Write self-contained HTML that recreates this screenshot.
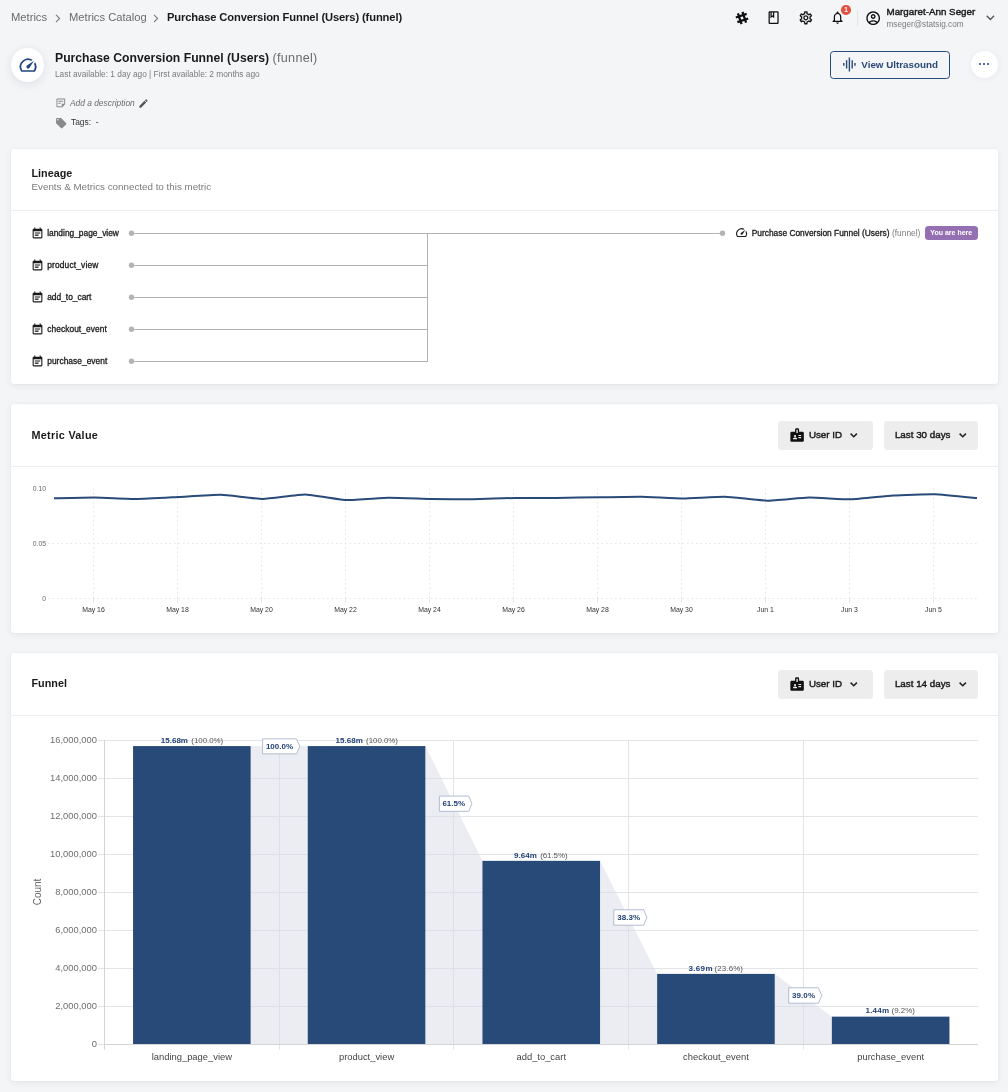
<!DOCTYPE html>
<html>
<head>
<meta charset="utf-8">
<title>Purchase Conversion Funnel (Users)</title>
<style>
*{box-sizing:border-box;margin:0;padding:0}
html,body{width:1008px;height:1092px;overflow:hidden}
html{background:#f4f5f7}
body{background:#f4f5f7;font-family:"Liberation Sans",sans-serif;color:#1a1a1a;position:relative;will-change:transform}
.abs{position:absolute;white-space:nowrap;line-height:1}
.t{position:absolute;white-space:nowrap;line-height:1}
.sb{font-weight:normal;-webkit-text-stroke:0.42px currentColor}
.sb2{font-weight:normal;-webkit-text-stroke:0.3px currentColor}
.b{font-weight:bold}
.card{position:absolute;left:11px;width:987px;background:#fff;border-radius:3px;box-shadow:0 2px 6px rgba(30,40,60,.07),0 0 2px rgba(30,40,60,.05)}
.hr{position:absolute;left:0;right:0;height:1px;background:#eee}
.btn{position:absolute;background:#ededed;border-radius:3.5px}
svg{position:absolute;overflow:visible}
</style>
</head>
<body>

<!-- top bar -->
<div class="t" id="bc1" style="left:11px;top:12px;font-size:11.2px;color:#6b6b6b">Metrics</div>
<svg style="left:55px;top:14px" width="6" height="9" viewBox="0 0 6 9"><path d="M1 0.8 L4.6 4.5 L1 8.2" fill="none" stroke="#7a7a7a" stroke-width="1.1"/></svg>
<div class="t" id="bc2" style="left:69px;top:12px;font-size:11.2px;color:#6b6b6b">Metrics Catalog</div>
<svg style="left:153px;top:14px" width="6" height="9" viewBox="0 0 6 9"><path d="M1 0.8 L4.6 4.5 L1 8.2" fill="none" stroke="#7a7a7a" stroke-width="1.1"/></svg>
<div class="t b" id="bc3" style="left:167px;top:12px;font-size:11.2px;letter-spacing:-0.13px;color:#1a1a1a">Purchase Conversion Funnel (Users) (funnel)</div>
<svg style="left:734px;top:9.9px" width="16" height="16" viewBox="-8 -8 16 16"><g transform="rotate(-18.5)" stroke="#111" stroke-width="2.3" fill="none"><path d="M-2.4 -5.7 V5.7 M2.4 -5.7 V5.7 M-5.7 -2.4 H5.7 M-5.7 2.4 H5.7"/></g></svg>
<svg style="left:766.4px;top:10.45px" width="15.2" height="15.2" viewBox="0 0 24 24"><path fill="#111" d="M18 2H6c-1.1 0-2 .9-2 2v16c0 1.1.9 2 2 2h12c1.1 0 2-.9 2-2V4c0-1.1-.9-2-2-2zM9 4h2v5l-1-.75L9 9V4zm9 16H6V4h1v9l3-2.25L13 13V4h5v16z"/></svg>
<svg style="left:798.15px;top:10.2px" width="15.7" height="15.7" viewBox="0 0 24 24"><path fill="#111" d="M19.43 12.98c.04-.32.07-.64.07-.98 0-.34-.03-.66-.07-.98l2.11-1.65c.19-.15.24-.42.12-.64l-2-3.46c-.09-.16-.26-.25-.44-.25-.06 0-.12.01-.17.03l-2.49 1c-.52-.4-1.08-.73-1.69-.98l-.38-2.65C14.46 2.18 14.25 2 14 2h-4c-.25 0-.46.18-.49.42l-.38 2.65c-.61.25-1.17.59-1.69.98l-2.49-1c-.06-.02-.12-.03-.18-.03-.17 0-.34.09-.43.25l-2 3.46c-.13.22-.07.49.12.64l2.11 1.65c-.04.32-.07.65-.07.98 0 .33.03.66.07.98l-2.11 1.65c-.19.15-.24.42-.12.64l2 3.46c.09.16.26.25.44.25.06 0 .12-.01.17-.03l2.49-1c.52.4 1.08.73 1.69.98l.38 2.65c.03.24.24.42.49.42h4c.25 0 .46-.18.49-.42l.38-2.65c.61-.25 1.17-.59 1.69-.98l2.49 1c.06.02.12.03.18.03.17 0 .34-.09.43-.25l2-3.46c.12-.22.07-.49-.12-.64l-2.11-1.65zm-1.98-1.71c.04.31.05.52.05.73 0 .21-.02.43-.05.73l-.14 1.13.89.7 1.08.84-.7 1.21-1.27-.51-1.04-.42-.9.68c-.43.32-.84.56-1.25.73l-1.06.43-.16 1.13-.2 1.35h-1.4l-.19-1.35-.16-1.13-1.06-.43c-.43-.18-.83-.41-1.23-.71l-.91-.7-1.06.43-1.27.51-.7-1.21 1.08-.84.89-.7-.14-1.13c-.03-.31-.05-.54-.05-.74s.02-.43.05-.73l.14-1.13-.89-.7-1.08-.84.7-1.21 1.27.51 1.04.42.9-.68c.43-.32.84-.56 1.25-.73l1.06-.43.16-1.13.2-1.35h1.39l.19 1.35.16 1.13 1.06.43c.43.18.83.41 1.23.71l.91.7 1.06-.43 1.27-.51.7 1.21-1.07.85-.89.7.14 1.13zM12 8c-2.21 0-4 1.79-4 4s1.79 4 4 4 4-1.79 4-4-1.79-4-4-4zm0 6c-1.1 0-2-.9-2-2s.9-2 2-2 2 .9 2 2-.9 2-2 2z"/></svg>
<svg style="left:830.25px;top:10.19px" width="15.1" height="15.1" viewBox="0 0 24 24"><path fill="#111" d="M12 22c1.1 0 2-.9 2-2h-4c0 1.1.9 2 2 2zm6-6v-5c0-3.07-1.63-5.64-4.5-6.32V4c0-.83-.67-1.5-1.5-1.5s-1.5.67-1.5 1.5v.68C7.64 5.36 6 7.92 6 11v5l-2 2v1h16v-1l-2-2zm-2 1H8v-6c0-2.48 1.51-4.5 4-4.5s4 2.02 4 4.5v6z"/></svg>
<div class="abs" style="left:841.2px;top:5px;width:9.6px;height:9.6px;border-radius:50%;background:#e4503f;color:#fff;font-size:6.5px;font-weight:bold;text-align:center;line-height:9.8px">1</div>
<div class="abs" style="left:857px;top:10px;width:1px;height:16px;background:#e3e4e8"></div>
<svg style="left:864.9px;top:10.1px" width="16.4" height="16.4" viewBox="0 0 24 24"><path fill="#111" d="M12 2C6.48 2 2 6.48 2 12s4.48 10 10 10 10-4.48 10-10S17.52 2 12 2zM7.35 18.5C8.66 17.56 10.26 17 12 17s3.34.56 4.65 1.5c-1.31.94-2.91 1.5-4.65 1.5s-3.34-.56-4.65-1.5zm10.79-1.38C16.45 15.8 14.32 15 12 15s-4.45.8-6.14 2.12C4.7 15.73 4 13.95 4 12c0-4.42 3.58-8 8-8s8 3.58 8 8c0 1.95-.7 3.73-1.86 5.12zM12 6c-1.93 0-3.5 1.57-3.5 3.5S10.07 13 12 13s3.5-1.57 3.5-3.5S13.93 6 12 6zm0 5c-.83 0-1.5-.67-1.5-1.5S11.17 8 12 8s1.5.67 1.5 1.5S12.83 11 12 11z"/></svg>
<div class="t sb" id="uname" style="left:886.5px;top:7px;font-size:9.8px;color:#1a1a1a">Margaret-Ann Seger</div>
<div class="t" id="umail" style="left:886.5px;top:21px;font-size:8.2px;color:#7b7b7b">mseger@statsig.com</div>
<svg style="left:985.6px;top:14.9px" width="9" height="6" viewBox="0 0 9 6"><path d="M0.7 0.8 L4.4 4.5 L8.1 0.8" fill="none" stroke="#555" stroke-width="1.35"/></svg>
<!-- title block -->
<div class="abs" id="ticon" style="left:11px;top:48px;width:33.4px;height:33.6px;border-radius:50%;background:#fff;box-shadow:0 2px 10px rgba(30,40,60,.10)"></div>
<svg style="left:18.25px;top:55.4px" width="20.2" height="20.2" viewBox="0 0 24 24"><path fill="#1f4480" d="M20.38 8.57l-1.23 1.85a8 8 0 0 1-.22 7.58H5.07A8 8 0 0 1 15.58 6.85l1.85-1.23A10 10 0 0 0 3.35 19a2 2 0 0 0 1.72 1h13.85a2 2 0 0 0 1.74-1 10 10 0 0 0-.27-10.44zm-9.79 6.84a2 2 0 0 0 2.83 0l5.66-8.49-8.49 5.66a2 2 0 0 0 0 2.83z"/></svg>
<div class="t b" id="title" style="left:55px;top:52px;font-size:12.2px;color:#1a1a1a">Purchase Conversion Funnel (Users)</div>
<div class="t" id="title2" style="left:272.5px;top:52px;font-size:12.6px;letter-spacing:0.3px;color:#6b6b6b">(funnel)</div>
<div class="t" id="sub" style="left:55px;top:70px;font-size:8.3px;color:#7b7b7b">Last available: 1 day ago | First available: 2 months ago</div>
<svg style="left:54.55px;top:97.35px" width="11.6" height="11.6" viewBox="0 0 24 24"><path fill="#8a8a8a" d="M19 5v9h-5v5H5V5h14m0-2H5c-1.1 0-2 .9-2 2v14c0 1.1.9 2 2 2h10l6-6V5c0-1.1-.9-2-2-2zm-7 11H7v-2h5v2zm5-4H7V8h10v2z"/></svg>
<div class="t" id="adddesc" style="left:70px;top:99px;font-size:8.4px;font-style:italic;color:#6b6b6b">Add a description</div>
<svg style="left:137.5px;top:97.7px" width="11" height="11" viewBox="0 0 24 24"><path fill="#555" d="M3 17.25V21h3.75L17.81 9.94l-3.75-3.75L3 17.25zM20.71 7.04c.39-.39.39-1.02 0-1.41l-2.34-2.34c-.39-.39-1.02-.39-1.41 0l-1.83 1.83 3.75 3.75 1.83-1.83z"/></svg>
<svg style="left:54.9px;top:117px" width="12.4" height="12.4" viewBox="0 0 24 24"><path fill="#8a8a8a" d="M21.41 11.58l-9-9C12.05 2.22 11.55 2 11 2H4c-1.1 0-2 .9-2 2v7c0 .55.22 1.05.59 1.42l9 9c.36.36.86.58 1.41.58.55 0 1.05-.22 1.41-.59l7-7c.37-.36.59-.86.59-1.41 0-.55-.23-1.06-.59-1.42zM5.5 7C4.67 7 4 6.33 4 5.5S4.67 4 5.5 4 7 4.67 7 5.5 6.33 7 5.5 7z"/></svg>
<div class="t" id="tags" style="left:71px;top:118px;font-size:8.4px;color:#333">Tags:&nbsp; -</div>
<div class="abs" id="vubtn" style="left:830px;top:51.3px;width:120px;height:27.5px;border:1px solid #2a4a7a;border-radius:3.5px"></div>
<svg style="left:840.6px;top:56.15px" width="16.8" height="16.8" viewBox="0 0 24 24"><path fill="#2a4a7a" d="M7 18h2V6H7v12zm4 4h2V2h-2v20zm-8-8h2v-4H3v4zm12 4h2V6h-2v12zm4-8v4h2v-4h-2z"/></svg>
<div class="t b" id="vutxt" style="left:861.3px;top:60px;font-size:9.8px;color:#2a4a7a">View Ultrasound</div>
<div class="abs" style="left:971.2px;top:51px;width:26.5px;height:26.5px;border-radius:50%;background:#fff;box-shadow:0 1px 6px rgba(30,40,60,.06)"></div>
<div class="abs" style="left:978.6px;top:62.6px;width:2.1px;height:2.1px;border-radius:50%;background:#1f3f77"></div>
<div class="abs" style="left:983px;top:62.6px;width:2.1px;height:2.1px;border-radius:50%;background:#1f3f77"></div>
<div class="abs" style="left:987.4px;top:62.6px;width:2.1px;height:2.1px;border-radius:50%;background:#1f3f77"></div>

<!-- lineage card -->
<div class="card" id="card1" style="top:149px;height:235px">
<div class="t b" id="lin" style="left:20.5px;top:19px;font-size:10.8px;">Lineage</div>
<div class="t" id="linsub" style="left:20.5px;top:33px;font-size:9.8px;color:#7b7b7b">Events &amp; Metrics connected to this metric</div>
<div class="hr" style="top:61px"></div>
<svg style="left:0;top:0" width="987" height="235" viewBox="0 0 987 235"><g stroke="#b3b3b3" stroke-width="1" fill="none"><path d="M120.5 84.5 H711.5"/><path d="M120.5 116.5 H416.5"/><path d="M120.5 148.5 H416.5"/><path d="M120.5 180.5 H416.5"/><path d="M120.5 212.5 H416.5"/><path d="M416.5 84 V213"/></g><g fill="#b3b3b3"><circle cx="120.5" cy="84.3" r="2.7"/><circle cx="120.5" cy="116.3" r="2.7"/><circle cx="120.5" cy="148.3" r="2.7"/><circle cx="120.5" cy="180.3" r="2.7"/><circle cx="120.5" cy="212.3" r="2.7"/><circle cx="711.5" cy="84.3" r="2.7"/></g></svg>
<svg style="left:19.5px;top:77.94px" width="13" height="13" viewBox="0 0 24 24"><path fill="#1a1a1a" d="M17 10H7v2h10v-2zm2-7h-1V1h-2v2H8V1H6v2H5c-1.11 0-1.99.9-1.99 2L3 19c0 1.1.89 2 2 2h14c1.1 0 2-.9 2-2V5c0-1.1-.9-2-2-2zm0 16H5V8h14v11zm-5-5H7v2h7v-2z"/></svg>
<div class="t sb2" id="ev0" style="left:36.2px;top:80px;font-size:8.4px;color:#1a1a1a;letter-spacing:0">landing_page_view</div>
<svg style="left:19.5px;top:109.94px" width="13" height="13" viewBox="0 0 24 24"><path fill="#1a1a1a" d="M17 10H7v2h10v-2zm2-7h-1V1h-2v2H8V1H6v2H5c-1.11 0-1.99.9-1.99 2L3 19c0 1.1.89 2 2 2h14c1.1 0 2-.9 2-2V5c0-1.1-.9-2-2-2zm0 16H5V8h14v11zm-5-5H7v2h7v-2z"/></svg>
<div class="t sb2" id="ev1" style="left:36.2px;top:112px;font-size:8.4px;color:#1a1a1a;letter-spacing:0.16px">product_view</div>
<svg style="left:19.5px;top:141.94px" width="13" height="13" viewBox="0 0 24 24"><path fill="#1a1a1a" d="M17 10H7v2h10v-2zm2-7h-1V1h-2v2H8V1H6v2H5c-1.11 0-1.99.9-1.99 2L3 19c0 1.1.89 2 2 2h14c1.1 0 2-.9 2-2V5c0-1.1-.9-2-2-2zm0 16H5V8h14v11zm-5-5H7v2h7v-2z"/></svg>
<div class="t sb2" id="ev2" style="left:36.2px;top:144px;font-size:8.4px;color:#1a1a1a">add_to_cart</div>
<svg style="left:19.5px;top:173.94px" width="13" height="13" viewBox="0 0 24 24"><path fill="#1a1a1a" d="M17 10H7v2h10v-2zm2-7h-1V1h-2v2H8V1H6v2H5c-1.11 0-1.99.9-1.99 2L3 19c0 1.1.89 2 2 2h14c1.1 0 2-.9 2-2V5c0-1.1-.9-2-2-2zm0 16H5V8h14v11zm-5-5H7v2h7v-2z"/></svg>
<div class="t sb2" id="ev3" style="left:36.2px;top:176px;font-size:8.4px;color:#1a1a1a;letter-spacing:0.07px">checkout_event</div>
<svg style="left:19.5px;top:205.94px" width="13" height="13" viewBox="0 0 24 24"><path fill="#1a1a1a" d="M17 10H7v2h10v-2zm2-7h-1V1h-2v2H8V1H6v2H5c-1.11 0-1.99.9-1.99 2L3 19c0 1.1.89 2 2 2h14c1.1 0 2-.9 2-2V5c0-1.1-.9-2-2-2zm0 16H5V8h14v11zm-5-5H7v2h7v-2z"/></svg>
<div class="t sb2" id="ev4" style="left:36.2px;top:208px;font-size:8.4px;color:#1a1a1a;letter-spacing:0.04px">purchase_event</div>
<svg style="left:723.7px;top:77.2px" width="13.2" height="13.2" viewBox="0 0 24 24"><path fill="#1a1a1a" d="M20.38 8.57l-1.23 1.85a8 8 0 0 1-.22 7.58H5.07A8 8 0 0 1 15.58 6.85l1.85-1.23A10 10 0 0 0 3.35 19a2 2 0 0 0 1.72 1h13.85a2 2 0 0 0 1.74-1 10 10 0 0 0-.27-10.44zm-9.79 6.84a2 2 0 0 0 2.83 0l5.66-8.49-8.49 5.66a2 2 0 0 0 0 2.83z"/></svg>
<div class="t sb2" id="lnname" style="left:740.7px;top:80px;font-size:8.4px;color:#1a1a1a">Purchase Conversion Funnel (Users)</div>
<div class="t" id="lnfun" style="left:881px;top:80px;font-size:8.4px;color:#7b7b7b">(funnel)</div>
<div class="abs" id="badge" style="left:914.3px;top:77.3px;width:52.7px;height:13.4px;border-radius:3.5px;background:#9470b3"></div>
<div class="t b" id="badget" style="left:919.3px;top:80px;font-size:7px;color:#fff">You are here</div>
</div>

<!-- metric value card -->
<div class="card" id="card2" style="top:404px;height:229px">
<div class="t b" id="mv" style="left:20.5px;top:26px;font-size:10.8px;letter-spacing:0.3px">Metric Value</div>
<div class="hr" style="top:62px"></div>
<div class="btn" style="left:767.2px;top:17px;width:94.4px;height:29px"></div>
<svg style="left:777.9px;top:22.9px" width="16.2" height="16.2" viewBox="0 0 24 24"><path fill="#111" d="M20 7h-5V4c0-1.1-.9-2-2-2h-2c-1.1 0-2 .9-2 2v3H4c-1.1 0-2 .9-2 2v11c0 1.1.9 2 2 2h16c1.1 0 2-.9 2-2V9c0-1.1-.9-2-2-2zM9 12c.83 0 1.5.67 1.5 1.5S9.83 15 9 15s-1.5-.67-1.5-1.5S8.17 12 9 12zm3 6H6v-.75c0-1 2-1.5 3-1.5s3 .5 3 1.5V18zm1-9h-2V4h2v5zm5 7.5h-4V15h4v1.5zm0-3h-4V12h4v1.5z"/></svg>
<div class="t sb" id="muid" style="left:797.9px;top:26px;font-size:9.8px;color:#1a1a1a">User ID</div>
<svg style="left:839.3px;top:28.8px" width="7.5" height="4.6" viewBox="0 0 7.5 4.6"><path d="M0.6 0.6 L3.75 3.75 L6.9 0.6" fill="none" stroke="#222" stroke-width="1.5"/></svg>
<div class="btn" style="left:873.2px;top:17px;width:93.8px;height:29px"></div>
<div class="t sb" id="mrng" style="left:883.9px;top:26px;font-size:9.8px;color:#1a1a1a">Last 30 days</div>
<svg style="left:948.3px;top:28.8px" width="7.5" height="4.6" viewBox="0 0 7.5 4.6"><path d="M0.6 0.6 L3.75 3.75 L6.9 0.6" fill="none" stroke="#222" stroke-width="1.5"/></svg>
<svg style="left:0;top:0" width="987" height="229" viewBox="0 0 987 229"><g stroke="#e6e6e6" stroke-width="1" stroke-dasharray="1.6 2.9" fill="none"><path d="M37 139.5 H966.5"/><path d="M37 194.5 H966.5"/><path d="M82.5 84.5 V194.5"/><path d="M166.5 84.5 V194.5"/><path d="M250.5 84.5 V194.5"/><path d="M334.5 84.5 V194.5"/><path d="M418.5 84.5 V194.5"/><path d="M502.5 84.5 V194.5"/><path d="M586.5 84.5 V194.5"/><path d="M670.5 84.5 V194.5"/><path d="M754.5 84.5 V194.5"/><path d="M838.5 84.5 V194.5"/><path d="M922.5 84.5 V194.5"/></g><g stroke="#e6e6e6" stroke-width="1" fill="none"><path d="M82.5 194.5 V199"/><path d="M166.5 194.5 V199"/><path d="M250.5 194.5 V199"/><path d="M334.5 194.5 V199"/><path d="M418.5 194.5 V199"/><path d="M502.5 194.5 V199"/><path d="M586.5 194.5 V199"/><path d="M670.5 194.5 V199"/><path d="M754.5 194.5 V199"/><path d="M838.5 194.5 V199"/><path d="M922.5 194.5 V199"/></g><path d="M43 94.3 C45.87 94.24 78.19 93.46 84 93.5 C89.81 93.54 120.12 94.94 126 94.9 C131.88 94.86 162.12 93.19 168 92.9 C173.88 92.61 204.12 90.66 210 90.8 C215.88 90.94 246.12 94.92 252 94.9 C257.88 94.88 288.12 90.42 294 90.5 C299.88 90.58 330.12 95.88 336 96.1 C341.88 96.32 372.12 93.78 378 93.7 C383.88 93.62 414.12 94.79 420 94.9 C425.88 95.01 456.12 95.37 462 95.3 C467.88 95.23 498.12 94 504 93.9 C509.88 93.8 540.12 93.94 546 93.9 C551.88 93.86 582.12 93.38 588 93.3 C593.88 93.22 624.12 92.62 630 92.7 C635.88 92.78 666.12 94.5 672 94.5 C677.88 94.5 708.12 92.55 714 92.7 C719.88 92.85 750.12 96.64 756 96.7 C761.88 96.76 792.12 93.6 798 93.5 C803.88 93.4 834.12 95.44 840 95.3 C845.88 95.16 876.12 91.85 882 91.5 C887.88 91.15 918.12 90.12 924 90.3 C929.88 90.48 963.06 93.83 966 94.1" fill="none" stroke="#2a4a7a" stroke-width="2" stroke-linejoin="round"/></svg>
<div class="t" style="left:5px;width:30px;text-align:right;top:82px;font-size:6.8px;color:#666">0.10</div>
<div class="t" style="left:5px;width:30px;text-align:right;top:137px;font-size:6.8px;color:#666">0.05</div>
<div class="t" style="left:5px;width:30px;text-align:right;top:192px;font-size:6.8px;color:#666">0</div>
<div class="abs" style="left:52.5px;width:60px;text-align:center;top:203px;font-size:6.9px;color:#333">May 16</div>
<div class="abs" style="left:136.5px;width:60px;text-align:center;top:203px;font-size:6.9px;color:#333">May 18</div>
<div class="abs" style="left:220.5px;width:60px;text-align:center;top:203px;font-size:6.9px;color:#333">May 20</div>
<div class="abs" style="left:304.5px;width:60px;text-align:center;top:203px;font-size:6.9px;color:#333">May 22</div>
<div class="abs" style="left:388.5px;width:60px;text-align:center;top:203px;font-size:6.9px;color:#333">May 24</div>
<div class="abs" style="left:472.5px;width:60px;text-align:center;top:203px;font-size:6.9px;color:#333">May 26</div>
<div class="abs" style="left:556.5px;width:60px;text-align:center;top:203px;font-size:6.9px;color:#333">May 28</div>
<div class="abs" style="left:640.5px;width:60px;text-align:center;top:203px;font-size:6.9px;color:#333">May 30</div>
<div class="abs" style="left:724.5px;width:60px;text-align:center;top:203px;font-size:6.9px;color:#333">Jun 1</div>
<div class="abs" style="left:808.5px;width:60px;text-align:center;top:203px;font-size:6.9px;color:#333">Jun 3</div>
<div class="abs" style="left:892.5px;width:60px;text-align:center;top:203px;font-size:6.9px;color:#333">Jun 5</div>
</div>

<!-- funnel card -->
<div class="card" id="card3" style="top:653px;height:428px">
<div class="t b" id="fn" style="left:20.5px;top:25px;font-size:10.8px;">Funnel</div>
<div class="hr" style="top:62px"></div>
<div class="btn" style="left:767.2px;top:17px;width:94.4px;height:29px"></div>
<svg style="left:777.9px;top:22.9px" width="16.2" height="16.2" viewBox="0 0 24 24"><path fill="#111" d="M20 7h-5V4c0-1.1-.9-2-2-2h-2c-1.1 0-2 .9-2 2v3H4c-1.1 0-2 .9-2 2v11c0 1.1.9 2 2 2h16c1.1 0 2-.9 2-2V9c0-1.1-.9-2-2-2zM9 12c.83 0 1.5.67 1.5 1.5S9.83 15 9 15s-1.5-.67-1.5-1.5S8.17 12 9 12zm3 6H6v-.75c0-1 2-1.5 3-1.5s3 .5 3 1.5V18zm1-9h-2V4h2v5zm5 7.5h-4V15h4v1.5zm0-3h-4V12h4v1.5z"/></svg>
<div class="t sb" id="fuid" style="left:797.9px;top:26px;font-size:9.8px;color:#1a1a1a">User ID</div>
<svg style="left:839.3px;top:28.8px" width="7.5" height="4.6" viewBox="0 0 7.5 4.6"><path d="M0.6 0.6 L3.75 3.75 L6.9 0.6" fill="none" stroke="#222" stroke-width="1.5"/></svg>
<div class="btn" style="left:873.2px;top:17px;width:93.8px;height:29px"></div>
<div class="t sb" id="frng" style="left:883.9px;top:26px;font-size:9.8px;color:#1a1a1a">Last 14 days</div>
<svg style="left:948.3px;top:28.8px" width="7.5" height="4.6" viewBox="0 0 7.5 4.6"><path d="M0.6 0.6 L3.75 3.75 L6.9 0.6" fill="none" stroke="#222" stroke-width="1.5"/></svg>
<svg style="left:0;top:0" width="987" height="428" viewBox="0 0 987 428"><g stroke="#e3e4e7" stroke-width="1" fill="none"><path d="M87 391.5 H967"/><path d="M87 353.5 H967"/><path d="M87 315.5 H967"/><path d="M87 277.5 H967"/><path d="M87 239.5 H967"/><path d="M87 201.5 H967"/><path d="M87 163.5 H967"/><path d="M87 125.5 H967"/><path d="M87 87.5 H967"/><path d="M93.5 87 V396.5"/><path d="M268.5 87 V396.5"/><path d="M442.5 87 V396.5"/><path d="M617.5 87 V396.5"/><path d="M792.5 87 V396.5"/></g><g stroke="#d3d4d8" stroke-width="1" fill="none"><path d="M93.5 87 V396.5"/><path d="M93.5 391.5 H967"/></g><g fill="#d9dce8" fill-opacity="0.5"><path d="M239.65 93.08 L296.75 93.08 V391 H239.65 Z"/><path d="M414.35 93.08 L471.45 207.84 V391 H414.35 Z"/><path d="M589.05 207.84 L646.15 320.89 V391 H589.05 Z"/><path d="M763.75 320.89 L820.85 363.64 V391 H763.75 Z"/></g><g fill="#284a78"><rect x="122.05" y="93.08" width="117.6" height="297.92"/><rect x="296.75" y="93.08" width="117.6" height="297.92"/><rect x="471.45" y="207.84" width="117.6" height="183.16"/><rect x="646.15" y="320.89" width="117.6" height="70.11"/><rect x="820.85" y="363.64" width="117.6" height="27.36"/></g><g fill="#fff" stroke="#a9b7cc" stroke-width="0.9"><path d="M251.6 85.85 H285.4 L288.9 93.38 L285.4 100.9 H251.6 Z"/><path d="M428.4 143.1 H457.8 L460.9 150.7 L457.8 158.3 H428.4 Z"/><path d="M602.8 256.75 H632.7 L635.9 264.48 L632.7 272.2 H602.8 Z"/><path d="M777.7 334.75 H807.4 L810.8 342.48 L807.4 350.2 H777.7 Z"/></g></svg>
<div class="t b" id="cv0" style="left:254.9px;top:90px;font-size:8px;color:#1f3f77;letter-spacing:0.03px">100.0%</div>
<div class="t b" id="cv1" style="left:431.4px;top:147px;font-size:8px;color:#1f3f77;letter-spacing:0.03px">61.5%</div>
<div class="t b" id="cv2" style="left:606.2px;top:261px;font-size:8px;color:#1f3f77;letter-spacing:0.03px">38.3%</div>
<div class="t b" id="cv3" style="left:780.9px;top:339px;font-size:8px;color:#1f3f77;letter-spacing:0.11px">39.0%</div>
<div class="t" style="left:25.9px;width:60px;text-align:right;top:386px;font-size:9.4px;color:#6e6e6e">0</div>
<div class="t" style="left:25.9px;width:60px;text-align:right;top:348px;font-size:9.4px;color:#6e6e6e">2,000,000</div>
<div class="t" style="left:25.9px;width:60px;text-align:right;top:310px;font-size:9.4px;color:#6e6e6e">4,000,000</div>
<div class="t" style="left:25.9px;width:60px;text-align:right;top:272px;font-size:9.4px;color:#6e6e6e">6,000,000</div>
<div class="t" style="left:25.9px;width:60px;text-align:right;top:234px;font-size:9.4px;color:#6e6e6e">8,000,000</div>
<div class="t" style="left:25.9px;width:60px;text-align:right;top:196px;font-size:9.4px;color:#6e6e6e">10,000,000</div>
<div class="t" style="left:25.9px;width:60px;text-align:right;top:158px;font-size:9.4px;color:#6e6e6e">12,000,000</div>
<div class="t" style="left:25.9px;width:60px;text-align:right;top:120px;font-size:9.4px;color:#6e6e6e">14,000,000</div>
<div class="t" style="left:25.9px;width:60px;text-align:right;top:82px;font-size:9.4px;color:#6e6e6e">16,000,000</div>
<div class="t b" id="dlb0" style="left:149.7px;top:84px;font-size:8px;color:#1f3f77;letter-spacing:0.03px">15.68m</div>
<div class="t" id="dlr0" style="left:180.3px;top:84px;font-size:7.9px;color:#555;letter-spacing:-0.02px">(100.0%)</div>
<div class="t b" id="dlb1" style="left:324.5px;top:84px;font-size:8px;color:#1f3f77;letter-spacing:0.03px">15.68m</div>
<div class="t" id="dlr1" style="left:355.1px;top:84px;font-size:7.9px;color:#555;letter-spacing:-0.02px">(100.0%)</div>
<div class="t b" id="dlb2" style="left:503px;top:199px;font-size:8px;color:#1f3f77;letter-spacing:0.05px">9.64m</div>
<div class="t" id="dlr2" style="left:529.2px;top:199px;font-size:7.9px;color:#555;letter-spacing:-0.04px">(61.5%)</div>
<div class="t b" id="dlb3" style="left:677.5px;top:312px;font-size:8px;color:#1f3f77;letter-spacing:0.33px">3.69m</div>
<div class="t" id="dlr3" style="left:703.5px;top:312px;font-size:7.9px;color:#555;letter-spacing:0.14px">(23.6%)</div>
<div class="t b" id="dlb4" style="left:854.5px;top:354px;font-size:8px;color:#1f3f77;letter-spacing:0.21px">1.44m</div>
<div class="t" id="dlr4" style="left:880.5px;top:354px;font-size:7.9px;color:#555;letter-spacing:0.05px">(9.2%)</div>
<div class="abs" id="xl0" style="left:120.85px;width:120px;text-align:center;top:399px;font-size:9.4px;color:#444">landing_page_view</div>
<div class="abs" id="xl1" style="left:295.55px;width:120px;text-align:center;top:399px;font-size:9.4px;color:#444">product_view</div>
<div class="abs" id="xl2" style="left:470.25px;width:120px;text-align:center;top:399px;font-size:9.4px;color:#444">add_to_cart</div>
<div class="abs" id="xl3" style="left:644.95px;width:120px;text-align:center;top:399px;font-size:9.4px;color:#444">checkout_event</div>
<div class="abs" id="xl4" style="left:819.65px;width:120px;text-align:center;top:399px;font-size:9.4px;color:#444">purchase_event</div>
<div class="abs" id="cnt" style="left:7.1px;top:234px;width:40px;height:10px;text-align:center;font-size:10px;color:#666;transform:rotate(-90deg)">Count</div>
</div>

</body>
</html>
